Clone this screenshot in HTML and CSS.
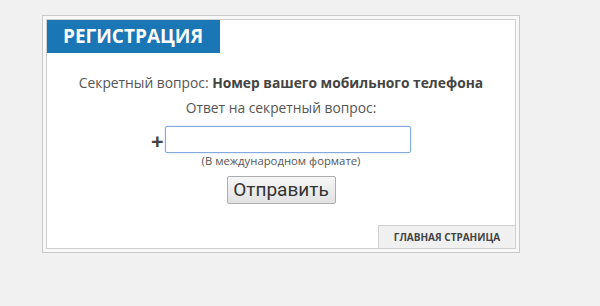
FILE: index.html
```html
<!DOCTYPE html>
<html lang="ru">
<head>
<meta charset="UTF-8">
<title>Регистрация</title>
<link rel="stylesheet" href="styles.css">
</head>
<body>

<div class="frame">
    <div class="panel">
        <div class="panel-head">
            <h2>Регистрация</h2>
        </div>
        <div class="panel-body">
            <p class="question">Секретный вопрос: <b>Номер вашего мобильного телефона</b></p>
            <label for="answer" class="answer-label">Ответ на секретный вопрос:</label>
            <div class="answer-row">
                <span class="plus">+</span>
                <input type="text" id="answer">
            </div>
            <div class="hint">(В международном формате)</div>
            <button class="send">Отправить</button>
        </div>
        <div class="panel-foot">
            <a href="#" class="home">Главная страница</a>
        </div>
    </div>
</div>

</body>
</html>
```

FILE: styles.css
```css
body {
    font-family: "Open Sans", Arial, sans-serif;
    margin: 0;
    padding: 15px 0 0 42px;
    background: #f1f1f1;
    color: #555;
}
.frame {
    width: 470px;
    padding: 3px;
    border: 1px solid #c9c9c9;
    background: #f8f8f8;
}
.panel {
    border: 1px solid #cfcfcf;
    background: #fff;
    height: 228px;
    display: flex;
    flex-direction: column;
}
.panel-head {
    display: flex;
}
.panel-head h2 {
    margin: 0;
    background: #1a76b5;
    color: #fff;
    font-size: 19px;
    font-weight: bold;
    text-transform: uppercase;
    height: 33px;
    line-height: 33px;
    padding: 0 15px 0 16px;
    width: 142px;
}
.panel-body {
    flex: 1;
    display: flex;
    flex-direction: column;
    align-items: center;
    font-size: 13.8px;
}
.question {
    margin: 20px 0 0;
    line-height: 20px;
}
.question b {
    color: #444;
}
.answer-label {
    margin-top: 5px;
    line-height: 20px;
}
.answer-row {
    display: flex;
    align-items: center;
    margin-top: 8px;
}
.plus {
    font-size: 22px;
    font-weight: bold;
    color: #444;
    width: 14px;
    line-height: 20px;
}
.answer-row input {
    width: 240px;
    height: 25px;
    padding: 0 2px;
    border: 1px solid #84a9dc;
    border-radius: 2px;
    box-shadow: 0 0 2px #b8cdef;
    outline: none;
}
.hint {
    font-size: 11.3px;
    line-height: 14px;
    margin-top: 1px;
}
.send {
    margin-top: 8px;
    font-family: Roboto, "Open Sans", Arial, sans-serif;
    font-size: 19px;
    color: #333;
    height: 28px;
    width: 109px;
    padding: 0;
    line-height: 24px;
    border: 1px solid #adadad;
    border-radius: 2px;
    background: linear-gradient(to bottom, #f6f6f6 0%, #e2e2e2 100%);
    cursor: pointer;
}
.panel-foot {
    display: flex;
    justify-content: flex-end;
}
.home {
    display: block;
    width: 136px;
    height: 22px;
    line-height: 23px;
    text-align: center;
    background: #f0f0f0;
    border-top: 1px solid #cfcfcf;
    border-left: 1px solid #cfcfcf;
    color: #444;
    font-size: 10px;
    font-weight: bold;
    text-transform: uppercase;
    text-decoration: none;
}
```
